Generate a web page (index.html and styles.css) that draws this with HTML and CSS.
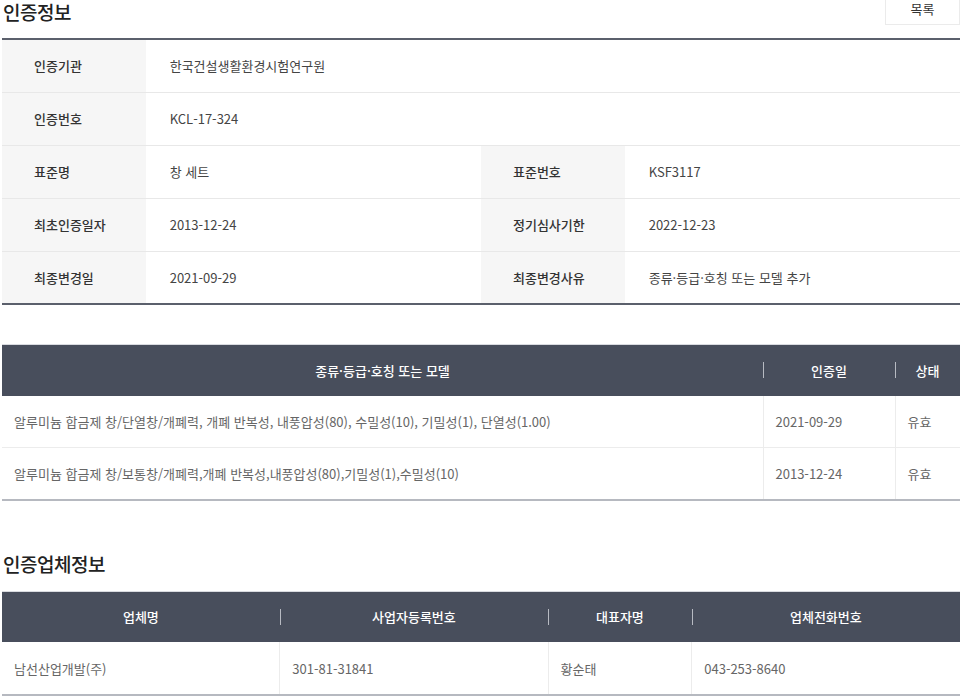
FILE: index.html
```html
<!DOCTYPE html>
<html lang="ko">
<head>
<meta charset="utf-8">
<title>인증정보</title>
<link rel="stylesheet" href="styles.css">
</head>
<body>
<div class="page">
  <div class="head-row">
    <h2 class="title">인증정보</h2>
    <button class="btn-list" type="button">목록</button>
  </div>
  <table class="info">
    <colgroup><col class="c15"><col class="c35"><col class="c15"><col class="c35"></colgroup>
    <tr><th>인증기관</th><td colspan="3">한국건설생활환경시험연구원</td></tr>
    <tr><th>인증번호</th><td colspan="3">KCL-17-324</td></tr>
    <tr><th>표준명</th><td>창 세트</td><th>표준번호</th><td>KSF3117</td></tr>
    <tr><th>최초인증일자</th><td>2013-12-24</td><th>정기심사기한</th><td>2022-12-23</td></tr>
    <tr><th>최종변경일</th><td>2021-09-29</td><th>최종변경사유</th><td>종류·등급·호칭 또는 모델 추가</td></tr>
  </table>

  <table class="list list-model">
    <colgroup><col><col class="w-date"><col class="w-state"></colgroup>
    <thead>
      <tr><th>종류·등급·호칭 또는 모델</th><th class="sep">인증일</th><th class="sep">상태</th></tr>
    </thead>
    <tbody>
      <tr><td>알루미늄 합금제 창/단열창/개폐력, 개폐 반복성, 내풍압성(80), 수밀성(10), 기밀성(1), 단열성(1.00)</td><td>2021-09-29</td><td>유효</td></tr>
      <tr><td>알루미늄 합금제 창/보통창/개폐력,개폐 반복성,내풍압성(80),기밀성(1),수밀성(10)</td><td>2013-12-24</td><td>유효</td></tr>
    </tbody>
  </table>

  <h2 class="title title-sub">인증업체정보</h2>
  <table class="list list-company">
    <colgroup><col class="w29"><col class="w28"><col class="w15"><col></colgroup>
    <thead>
      <tr><th>업체명</th><th class="sep">사업자등록번호</th><th class="sep">대표자명</th><th class="sep">업체전화번호</th></tr>
    </thead>
    <tbody>
      <tr><td>남선산업개발(주)</td><td>301-81-31841</td><td>황순태</td><td>043-253-8640</td></tr>
    </tbody>
  </table>
</div>
</body>
</html>
```

FILE: styles.css
```css
* { box-sizing: border-box; }
html, body { margin: 0; padding: 0; background: #fff; }
body {
  font-family: "Noto Sans CJK KR", "Noto Sans", sans-serif;
  font-size: 13px;
  color: #333;
}
.page {
  width: 958px;
  margin-left: 2px;
}
.head-row {
  display: flex;
  justify-content: space-between;
  align-items: flex-start;
  height: 38px;
}
.title {
  margin: 0;
  padding-left: 1px;
  font-size: 19px;
  font-weight: 500;
  line-height: 24px;
  color: #222;
  letter-spacing: -0.5px;
}
.btn-list {
  margin-top: -10px;
  width: 75px;
  height: 35px;
  background: #fff;
  border: 1px solid #ebebeb;
  font-family: inherit;
  font-size: 13px;
  color: #333;
  padding: 0;
  padding-top: 1px;
}
table {
  width: 100%;
  border-collapse: collapse;
  table-layout: fixed;
}
.info {
  border-top: 2px solid #5b606c;
  border-bottom: 2px solid #5b606c;
}
.c15 { width: 15%; }
.c35 { width: 35%; }
.info th, .info td {
  height: 53px;
  border-bottom: 1px solid #e8e8e8;
  text-align: left;
  font-size: 13px;
  padding: 0;
}
.info tr:last-child th, .info tr:last-child td { border-bottom: 0; height: 53px; }
.info th {
  background: #f6f6f6;
  padding-left: 32px;
  font-weight: 500;
  color: #333;
}
.info td {
  padding-left: 24px;
  color: #444;
}

.list { margin-top: 39px; }
.list thead th {
  background: #484e5c;
  color: #fff;
  font-weight: 500;
  font-size: 13px;
  height: 51px;
  padding: 0;
  position: relative;
  border-top: 1px solid #d9dbe0;
}
.list thead th.sep::before {
  content: "";
  position: absolute;
  left: 0;
  top: 17px;
  width: 1px;
  height: 16px;
  background: #b7bac2;
}
.list tbody td {
  height: 52px;
  padding: 0 0 0 12px;
  color: #666;
  font-size: 13px;
  border-bottom: 1px solid #ececec;
  border-left: 1px solid #ececec;
  text-align: left;
  white-space: nowrap;
  overflow: hidden;
}
.list tbody td:first-child { border-left: 0; }
.list tbody tr:last-child td { border-bottom: 2px solid #b6b9c0; }
.w-date { width: 132px; }
.w-state { width: 65px; }
.list-company { margin-top: 15px; }
.list-company thead th { height: 51px; }
.list-company tbody td { height: 53px; }
.w29 { width: 29%; }
.w28 { width: 28%; }
.w15 { width: 15%; }
.title-sub { margin-top: 51px; }
```
